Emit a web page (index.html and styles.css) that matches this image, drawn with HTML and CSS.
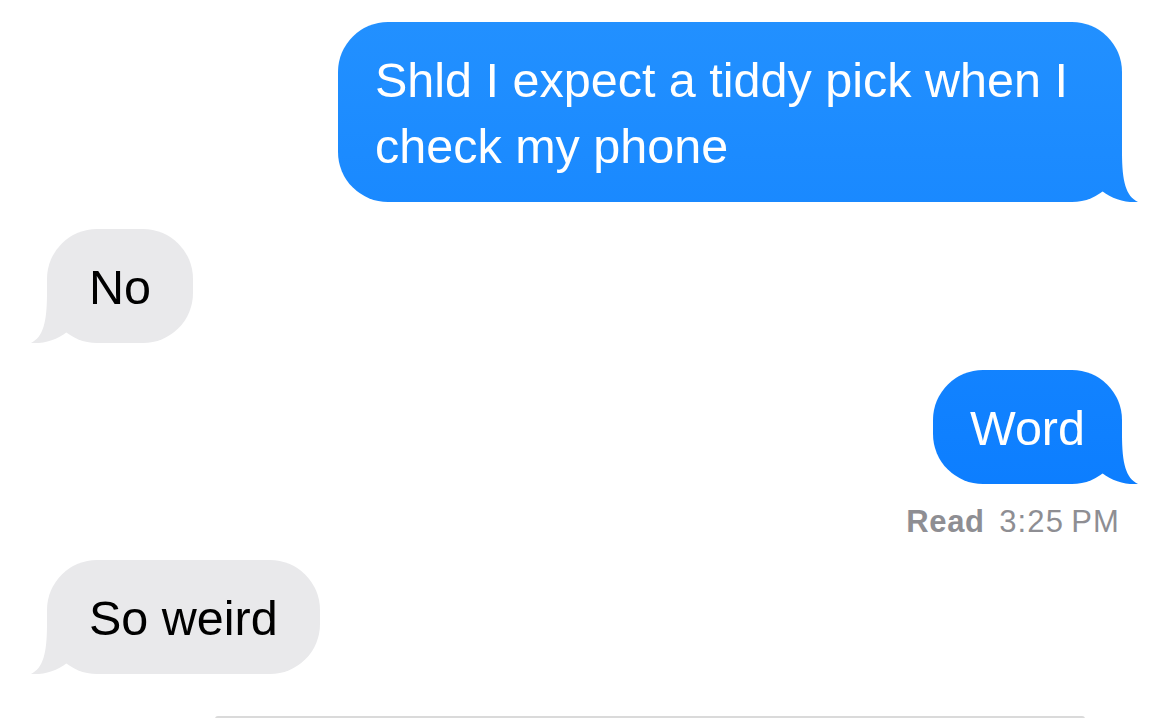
FILE: index.html
```html
<!DOCTYPE html>
<html lang="en">
<head>
    <meta charset="UTF-8">
    <meta name="viewport" content="width=device-width, initial-scale=1.0">
    <title>Messages</title>
    <link rel="stylesheet" href="styles.css">
</head>
<body>
    <div class="thread">
        <div class="message sent">
            <div class="bubble">
                Shld I expect a tiddy pick when I check my phone
                <span class="tail"></span>
            </div>
        </div>

        <div class="message received">
            <div class="bubble">
                No
                <span class="tail"></span>
            </div>
        </div>

        <div class="message sent">
            <div class="bubble">
                Word
                <span class="tail"></span>
            </div>
        </div>
        <div class="receipt"><strong>Read</strong> 3:25&#8239;PM</div>

        <div class="message received">
            <div class="bubble">
                So weird
                <span class="tail"></span>
            </div>
        </div>

        <div class="next-item"></div>
    </div>
</body>
</html>
```

FILE: styles.css
```css
body {
    margin: 0;
    padding: 0;
    background-color: #ffffff;
    font-family: "Liberation Sans", Arial, sans-serif;
    overflow: hidden;
}

.thread {
    display: flex;
    flex-direction: column;
    padding: 22px 48px 0 47px;
}

.message {
    display: flex;
    margin-bottom: 27px;
}

.message.sent {
    justify-content: flex-end;
}

.message.received {
    justify-content: flex-start;
}

.bubble {
    position: relative;
    box-sizing: border-box;
    max-width: 784px;
    padding: 25px 37px 23px;
    border-radius: 50px;
    font-size: 48.5px;
    line-height: 66px;
}

/* sent bubbles share one gradient over the whole screen, like iOS */
.sent .bubble {
    background: linear-gradient(to bottom, #2391ff, #0275ff) fixed;
    color: #ffffff;
}

.received .bubble {
    background-color: #e9e9eb;
    color: #000000;
    padding: 25px 42px 23px;
}

/* little curled tail at the bottom corner */
.tail {
    position: absolute;
    bottom: 0;
    width: 40px;
    height: 50px;
}

.sent .tail {
    right: -16px;
    background: inherit;
    clip-path: path('M24 0 C24 30 28 44 40 50 C28 51 14 47 4 39 L4 0 Z');
}

.received .tail {
    left: -16px;
    background: #e9e9eb;
    clip-path: path('M16 0 C16 30 12 44 0 50 C12 51 26 47 36 39 L36 0 Z');
}

/* the message right before the receipt sits closer to it */
.message.sent:has(+ .receipt) {
    margin-bottom: 20px;
}

.receipt {
    align-self: flex-end;
    margin-right: 2px;
    margin-bottom: 20px;
    font-size: 31px;
    line-height: 36px;
    letter-spacing: 1.1px;
    color: #8e8e93;
}

.receipt strong {
    font-weight: bold;
    letter-spacing: 0.6px;
    margin-right: 5px;
}

.next-item {
    margin: 15px 37px 0 168px;
    height: 3px;
    background-color: #dadada;
    border-radius: 3px 3px 0 0;
}
```
